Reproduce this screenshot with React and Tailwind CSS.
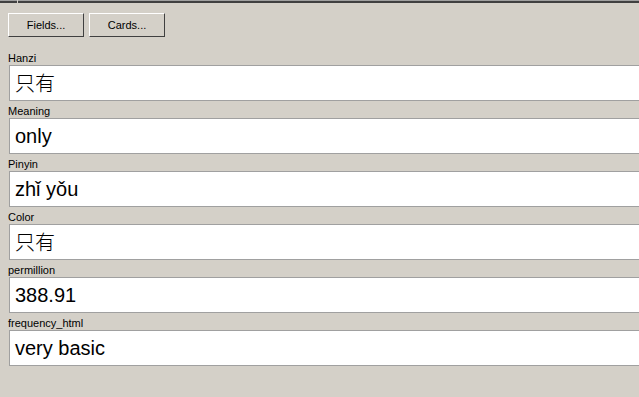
const fields = [
    { label: "Hanzi", value: "只有", cjk: true },
    { label: "Meaning", value: "only" },
    { label: "Pinyin", value: "zhǐ yǒu" },
    { label: "Color", value: "只有", cjk: true },
    { label: "permillion", value: "388.91" },
    { label: "frequency_html", value: "very basic" },
];

function ClassicButton({ children }) {
    return (
        <button className="w-[76px] h-[24px] bg-[#d4d0c8] border border-t-white border-l-white border-r-[#404040] border-b-[#404040] text-[11px] text-black leading-none">
            {children}
        </button>
    );
}

function Field({ label, value, cjk }) {
    return (
        <div className="flex flex-col">
            <div className="h-[13px] text-[11px] leading-[13px] text-black">{label}</div>
            <div className="h-[36px] ml-[1px] bg-white border-t border-b border-l border-[#a0a0a0] flex items-center pl-[5px]">
                <span
                    className="text-[20px] text-black leading-none"
                    style={cjk ? { fontFamily: '"Noto Sans CJK SC", sans-serif', fontWeight: 300 } : undefined}
                >
                    {value}
                </span>
            </div>
        </div>
    );
}

export default function App() {
    return (
        <div className="w-[639px] h-[397px] bg-[#d4d0c8] overflow-hidden" style={{ fontFamily: '"Liberation Sans", Arial, sans-serif' }}>
            {/* top edge */}
            <div className="flex h-[3px]">
                <div className="w-[17px] border-t border-[#a0a0a0] bg-[#404040]"></div>
                <div className="w-[1px] bg-[#d4d0c8]"></div>
                <div className="flex-1 border-t border-[#a0a0a0] bg-[#404040]"></div>
            </div>

            <div className="flex gap-[5px] pl-[8px] mt-[10px]">
                <ClassicButton>Fields...</ClassicButton>
                <ClassicButton>Cards...</ClassicButton>
            </div>

            <div className="flex flex-col gap-[4px] pl-[8px] mt-[15px]">
                {fields.map((f) => (
                    <Field key={f.label} {...f} />
                ))}
            </div>
        </div>
    );
}
